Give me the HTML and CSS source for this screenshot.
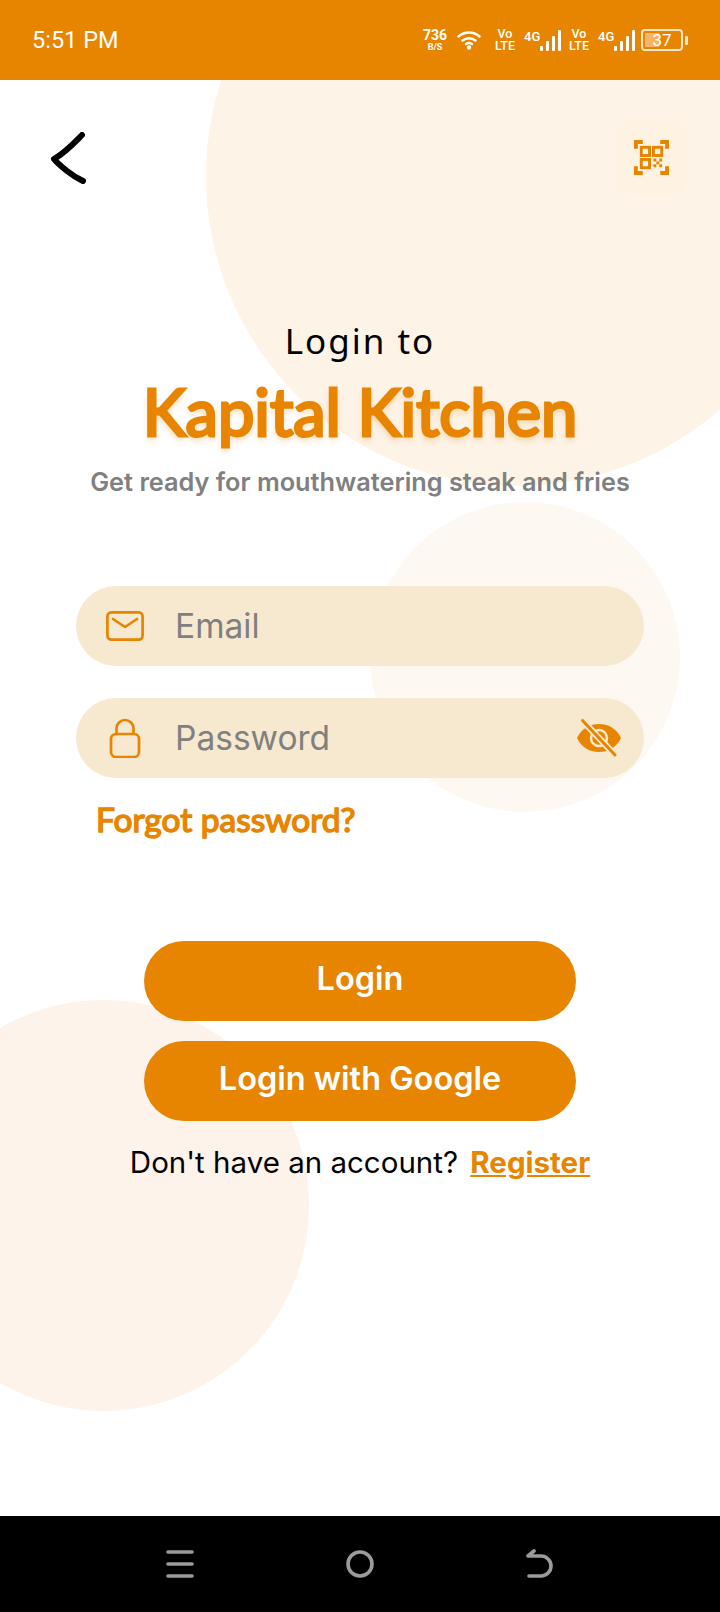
FILE: index.html
```html
<!DOCTYPE html>
<html lang="en">
<head>
    <meta charset="UTF-8">
    <meta name="viewport" content="width=device-width, initial-scale=1.0">
    <title>Login to Kapital Kitchen</title>
    <link rel="stylesheet" href="styles.css">
</head>
<body>
    <div class="phone">
        <div class="status-bar">
            <span class="clock">5:51 PM</span>
            <div class="status-icons">
                <div class="speed"><span class="speed-num">736</span><span class="speed-unit">B/S</span></div>
                <svg class="wifi" width="24" height="20" viewBox="0 0 24 20" fill="none" stroke="#fff" stroke-width="2.4" stroke-linecap="round">
                    <path d="M1.5 6.5C7.5 1.2 16.5 1.2 22.5 6.5"/>
                    <path d="M5.5 10.5C9.2 7.4 14.8 7.4 18.5 10.5"/>
                    <path d="M9 14C10.8 12.8 13.2 12.8 15 14"/>
                    <circle cx="12" cy="17.5" r="1" fill="#fff"/>
                </svg>
                <div class="volte"><span>Vo</span><span>LTE</span></div>
                <div class="signal">
                    <span class="net">4G</span>
                    <svg width="21" height="21" viewBox="0 0 21 21" fill="#fff">
                        <rect x="0" y="16" width="3" height="5" rx="1"/>
                        <rect x="6" y="11" width="3" height="10" rx="1"/>
                        <rect x="12" y="6" width="3" height="15" rx="1"/>
                        <rect x="18" y="0" width="3" height="21" rx="1"/>
                    </svg>
                </div>
                <div class="volte"><span>Vo</span><span>LTE</span></div>
                <div class="signal">
                    <span class="net">4G</span>
                    <svg width="21" height="21" viewBox="0 0 21 21" fill="#fff">
                        <rect x="0" y="16" width="3" height="5" rx="1"/>
                        <rect x="6" y="11" width="3" height="10" rx="1"/>
                        <rect x="12" y="6" width="3" height="15" rx="1"/>
                        <rect x="18" y="0" width="3" height="21" rx="1"/>
                    </svg>
                </div>
                <div class="battery">
                    <div class="battery-body"><span class="battery-fill"></span><span class="battery-num">37</span></div>
                    <span class="battery-nub"></span>
                </div>
            </div>
        </div>

        <main class="screen">
            <div class="circle circle-top"></div>
            <div class="circle circle-mid"></div>
            <div class="circle circle-low"></div>

            <div class="top-row">
                <svg class="back" width="38" height="52" viewBox="0 0 38 52" fill="none" stroke="#000" stroke-width="6" stroke-linecap="round" stroke-linejoin="round">
                    <path d="M33 3C26 10 17 20 5 27C8 31 12 34 18 39C23 43 28 46 34 49"/>
                </svg>
                <div class="qr-box">
                    <svg width="35" height="35" viewBox="0 0 36 36" fill="none" stroke="#e88500">
                        <path d="M2 9V2H9M27 2H34V9M2 27V34H9M27 34H34V27" stroke-width="4"/>
                        <rect x="7.500" y="7.500" width="8.500" height="8.500" stroke-width="3"/>
                        <rect x="20" y="7.500" width="8.500" height="8.500" stroke-width="3"/>
                        <rect x="7.500" y="20" width="8.500" height="8.500" stroke-width="3"/>
                        <path d="M20 19h3v3h-3zM26 19h3v3h-3zM23 22h3v3h-3zM20 25h3v3h-3zM26 25h3v3h-3z" fill="#e88500" stroke="none"/>
                    </svg>
                </div>
            </div>

            <div class="heading">
                <div class="login-to">Login to</div>
                <h1 class="brand">Kapital Kitchen</h1>
                <p class="tagline">Get ready for mouthwatering steak and fries</p>
            </div>

            <form class="login-form">
                <div class="field">
                    <svg class="field-icon" width="38" height="30" viewBox="0 0 38 30" fill="none" stroke="#e88500" stroke-width="2.700" stroke-linecap="round" stroke-linejoin="round">
                        <rect x="1.4" y="1.4" width="35.200" height="27.200" rx="4"/>
                        <path d="M7 8L19 16L31 8"/>
                    </svg>
                    <span class="placeholder">Email</span>
                </div>
                <div class="field">
                    <svg class="field-icon" width="38" height="40" viewBox="0 0 38 40" fill="none" stroke="#e88500" stroke-width="2.700" stroke-linejoin="round">
                        <rect x="5" y="16" width="28" height="23" rx="5"/>
                        <path d="M10.5 16V10.5A8.500 8.500 0 0 1 27.500 10.500V16"/>
                    </svg>
                    <span class="placeholder">Password</span>
                    <svg class="eye" width="46" height="38" viewBox="0 0 46 38" fill="none">
                        <path d="M1 19C6 9 14 5 23 5S40 9 45 19C40 29 32 33 23 33S6 29 1 19Z" fill="#e88500"/>
                        <circle cx="23" cy="19" r="8" fill="none" stroke="#f7e9cf" stroke-width="2.500"/>
                        <path d="M7 2L39 36" stroke="#f7e9cf" stroke-width="6.500"/>
                        <path d="M6.500 1.500L39 36" stroke="#e88500" stroke-width="3" stroke-linecap="round"/>
                    </svg>
                </div>
                <a class="forgot">Forgot password?</a>

                <div class="actions">
                    <button type="button" class="btn">Login</button>
                    <button type="button" class="btn">Login with Google</button>
                </div>
            </form>

            <p class="register-line">Don't have an account? <a class="register">Register</a></p>
        </main>

        <div class="nav-bar">
            <svg width="28" height="30" viewBox="0 0 28 30" stroke="#9b9b9b" stroke-width="3.600" stroke-linecap="round">
                <path d="M2 3H26M2 15H26M2 27H26"/>
            </svg>
            <svg width="28" height="28" viewBox="0 0 28 28" fill="none" stroke="#9b9b9b" stroke-width="3.600">
                <circle cx="14" cy="14" r="12"/>
            </svg>
            <svg width="28" height="30" viewBox="0 0 28 30" fill="none" stroke="#9b9b9b" stroke-width="3.600" stroke-linecap="round" stroke-linejoin="round">
                <path d="M3 27H15A10 10 0 0 0 15 7H2L8 2"/>
            </svg>
        </div>
    </div>
</body>
</html>
```

FILE: styles.css
```css
* { box-sizing: border-box; }
body { margin: 0; font-family: Inter, Arial, sans-serif; }
.phone { width: 720px; height: 1612px; display: flex; flex-direction: column; overflow: hidden; background: #fff; }

/* status bar */
.status-bar { height: 80px; background: #e88500; color: #fff; display: flex; align-items: center; justify-content: space-between; padding: 0 32px 0 32px; font-family: Roboto, Arial, sans-serif; flex-shrink: 0; }
.clock { font-size: 23.500px; }
.status-icons { display: flex; align-items: center; }
.speed { display: flex; flex-direction: column; align-items: center; width: 24px; font-weight: 700; line-height: 1; }
.speed-num { font-size: 14px; line-height: 14px; }
.speed-unit { font-size: 9px; line-height: 10px; }
.wifi { margin: 0 14px 0 10px; }
.volte { display: flex; flex-direction: column; align-items: center; width: 20px; font-size: 12.500px; font-weight: 500; line-height: 12px; }
.signal { display: flex; align-items: flex-start; margin: 0 8px 0 9px; height: 21px; }
.net { font-size: 13px; font-weight: 500; line-height: 13px; width: 16px; }
.battery { display: flex; align-items: center; margin-left: -2px; }
.battery-body { position: relative; width: 42px; height: 22px; border: 2px solid #fce7c8; border-radius: 4px; display: flex; align-items: center; justify-content: center; }
.battery-fill { position: absolute; left: 2px; top: 2px; bottom: 2px; width: 14px; background: #f3b469; }
.battery-num { position: relative; font-size: 17px; line-height: 1; }
.battery-nub { width: 3px; height: 9px; margin-left: 2px; background: #fce7c8; border-radius: 1px; }

/* main screen */
.screen { position: relative; flex: 1; overflow: hidden; display: flex; flex-direction: column; align-items: center; }
.circle { position: absolute; border-radius: 50%; }
.circle-top { left: 206px; top: -214px; width: 620px; height: 620px; background: #fdf3e6; }
.circle-mid { left: 370px; top: 422px; width: 310px; height: 310px; background: #fef8f2; }
.circle-low { left: -102px; top: 920px; width: 411px; height: 411px; background: #fdf3ea; }
.top-row, .heading, .login-form, .register-line { position: relative; }

.top-row { width: 100%; display: flex; justify-content: space-between; align-items: flex-start; padding: 40px 33px 0 49px; }
.back { margin-top: 12px; }
.qr-box { width: 72px; height: 75px; border-radius: 18px; background: #fef3e3; display: flex; align-items: center; justify-content: center; }

.heading { margin-top: 124px; text-align: center; display: flex; flex-direction: column; align-items: center; }
.login-to { font-family: "Noto Sans", Arial, sans-serif; font-size: 35px; line-height: 44px; letter-spacing: 2px; color: #000; }
.brand { margin: 10px 0 0; font-family: Lato, Arial, sans-serif; font-size: 65px; line-height: 76px; font-weight: 400; color: #e88500; -webkit-text-stroke: 3px #e88500; text-shadow: 0 4px 6px rgba(232, 133, 0, .35); }
.tagline { margin: 16px 0 0; font-size: 25.300px; line-height: 34px; font-weight: 600; color: #808080; }

.login-form { margin-top: 87px; width: 568px; display: flex; flex-direction: column; }
.field { height: 80px; border-radius: 40px; background: #f7e9cf; display: flex; align-items: center; margin-bottom: 32px; padding-left: 30px; }
.field-icon { flex-shrink: 0; }
.placeholder { margin-left: 31px; font-size: 33.500px; color: #808080; flex: 1; }
.eye { margin-right: 22px; }
.field:nth-child(2) { margin-bottom: 0; }
.forgot { margin: 19px 0 0 20px; font-family: Lato, Arial, sans-serif; font-size: 33.500px; line-height: 44px; font-weight: 400; color: #e88500; -webkit-text-stroke: 1.500px #e88500; }

.actions { margin-top: 100px; display: flex; flex-direction: column; align-items: center; gap: 20px; }
.btn { width: 432px; height: 80px; border: none; border-radius: 40px; padding: 0 0 6px; background: #e88500; color: #fff; font-family: Inter, Arial, sans-serif; font-size: 32.500px; font-weight: 600; }

.register-line { margin: 21px 0 0; font-size: 29.500px; line-height: 40px; color: #000; }
.register { margin-left: 4px; font-weight: 700; color: #e88500; text-decoration: underline; }

/* bottom nav */
.nav-bar { height: 96px; background: #000; display: flex; align-items: center; justify-content: center; gap: 152px; flex-shrink: 0; }
```
